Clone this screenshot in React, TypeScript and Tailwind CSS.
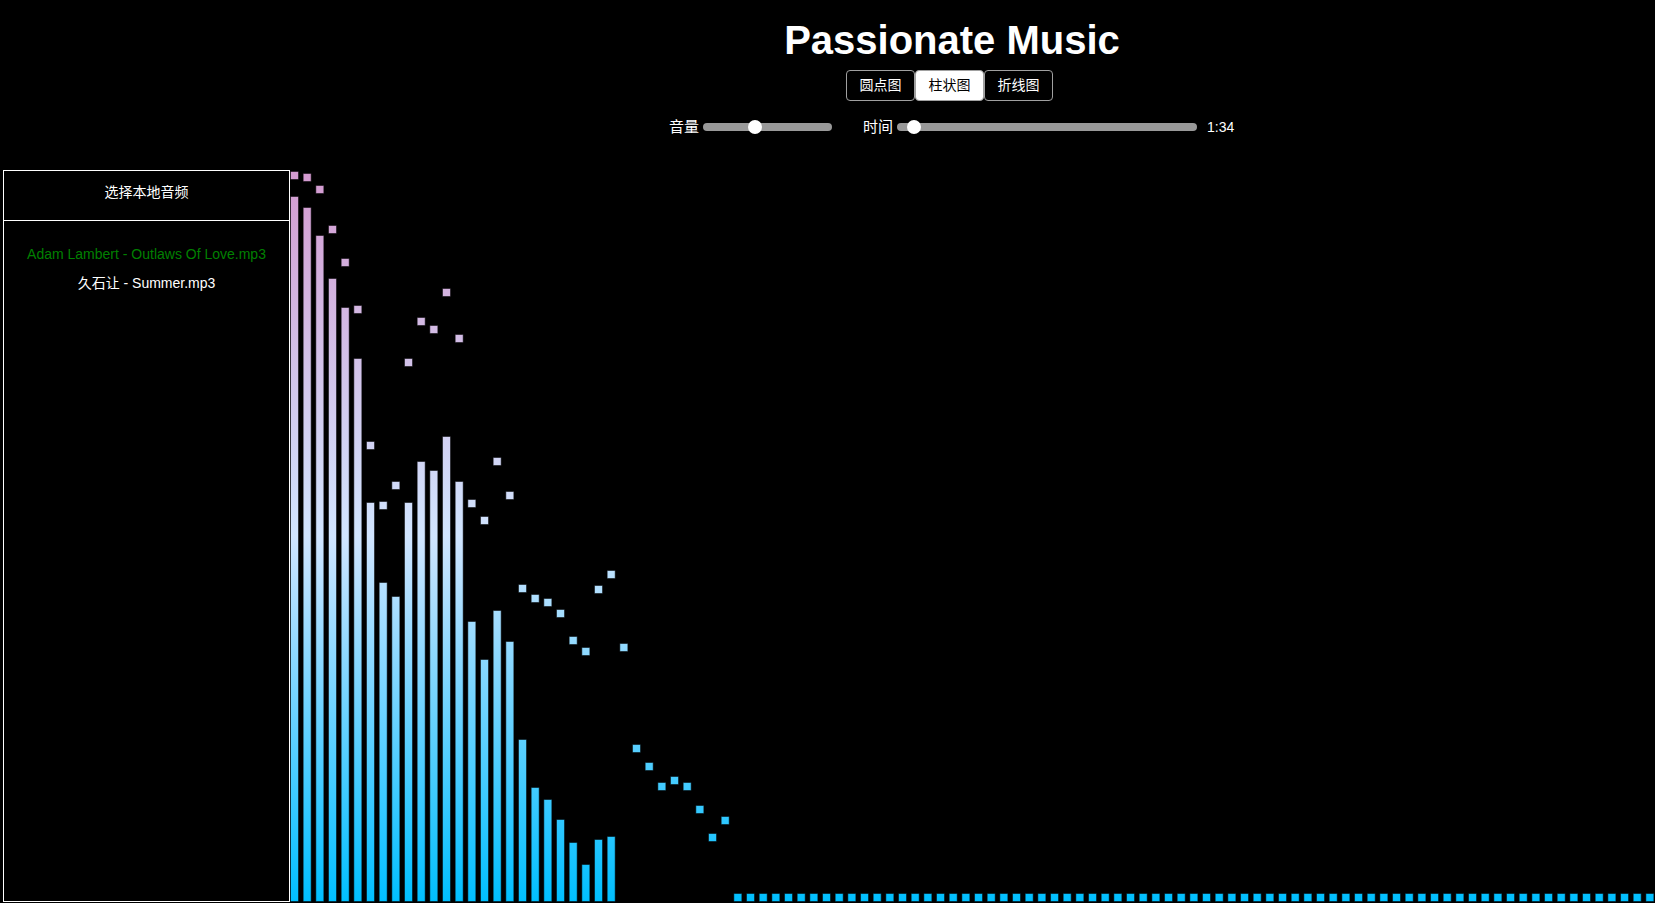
import React from "react";

// bar tops and cap positions, measured in px from the top of the 732px canvas
const BAR_TOPS = [26, 37, 65, 108, 137, 188, 332, 412, 426, 332, 291, 300, 266, 311, 451, 489, 440, 471, 569, 617, 629, 649, 672, 694, 669, 666];
const CAPS = [1, 3, 15, 55, 88, 135, 271, 331, 311, 188, 147, 155, 118, 164, 329, 346, 287, 321, 414, 424, 428, 439, 466, 477, 415, 400, 473, 574, 592, 612, 606, 612, 635, 663, 646];

const H = 732;
const W = 1365;
const STEP = 12.667;
const COUNT = 108;

function Spectrum() {
  const items = Array.from({ length: COUNT }, (_, i) => ({
    x: i * STEP,
    top: BAR_TOPS[i],
    cap: CAPS[i] ?? H - 9,
  }));
  return (
    <svg width={W} height={H} viewBox={`0 0 ${W} ${H}`} className="block shrink-0">
      <defs>
        <linearGradient id="spec" gradientUnits="userSpaceOnUse" x1="0" y1="0" x2="0" y2={H}>
          <stop offset="0" stopColor="#d49ad0" />
          <stop offset="0.5" stopColor="#d1e5ff" />
          <stop offset="1" stopColor="#00bfff" />
        </linearGradient>
      </defs>
      {items.map((it, i) => (
        <g key={i} fill="url(#spec)" stroke="rgba(0,0,0,0.5)" strokeWidth={1}>
          {it.top !== undefined && (
            <rect x={it.x + 0.5} y={it.top + 0.5} width={8} height={H - it.top - 1} />
          )}
          <rect x={it.x + 0.5} y={it.cap + 0.5} width={8} height={8} />
        </g>
      ))}
    </svg>
  );
}

function Slider({ width, thumb }: { width: number; thumb: number }) {
  return (
    <div className="relative h-[8px] rounded-full bg-[#999999]" style={{ width }}>
      <div className="absolute top-[-3px] h-[14px] w-[14px] rounded-full bg-white" style={{ left: thumb }} />
    </div>
  );
}

export default function App() {
  const modes = ["圆点图", "柱状图", "折线图"];
  return (
    <div className="h-screen w-full overflow-hidden bg-black text-white font-['Liberation_Sans','Noto_Sans_CJK_SC',sans-serif]">
      {/* header */}
      <header className="h-[170px] pt-[17px]">
        <div className="flex justify-center pl-[249px]">
          <h1 className="text-[40px] font-bold leading-[46px]">Passionate Music</h1>
        </div>
        <div className="mt-[7px] flex justify-center pl-[244px]">
          {modes.map((m, i) => (
            <button
              key={m}
              className={`h-[31px] w-[69px] rounded-[4px] border border-[#a0a0a0] text-[14px] ${
                i === 1 ? "bg-white text-black" : "bg-black text-white"
              }`}
            >
              {m}
            </button>
          ))}
        </div>
        <div className="mt-[16px] flex h-[20px] items-center pl-[669px] text-[15px]">
          <span>音量</span>
          <div className="ml-[4px]">
            <Slider width={129} thumb={45} />
          </div>
          <span className="ml-[31px]">时间</span>
          <div className="ml-[4px]">
            <Slider width={300} thumb={10} />
          </div>
          <span className="ml-[10px] text-[14px]">1:34</span>
        </div>
      </header>

      {/* player */}
      <main className="flex">
        <aside className="ml-[3px] h-[732px] w-[287px] border border-white">
          <div className="h-[50px] border-b border-white pt-[11px] text-center text-[14px] leading-[20px]">
            选择本地音频
          </div>
          <ul className="pt-[19px] text-center text-[14px] leading-[29px]">
            <li className="text-[#008000]">Adam Lambert - Outlaws Of Love.mp3</li>
            <li>久石让 - Summer.mp3</li>
          </ul>
        </aside>
        <Spectrum />
      </main>
    </div>
  );
}
